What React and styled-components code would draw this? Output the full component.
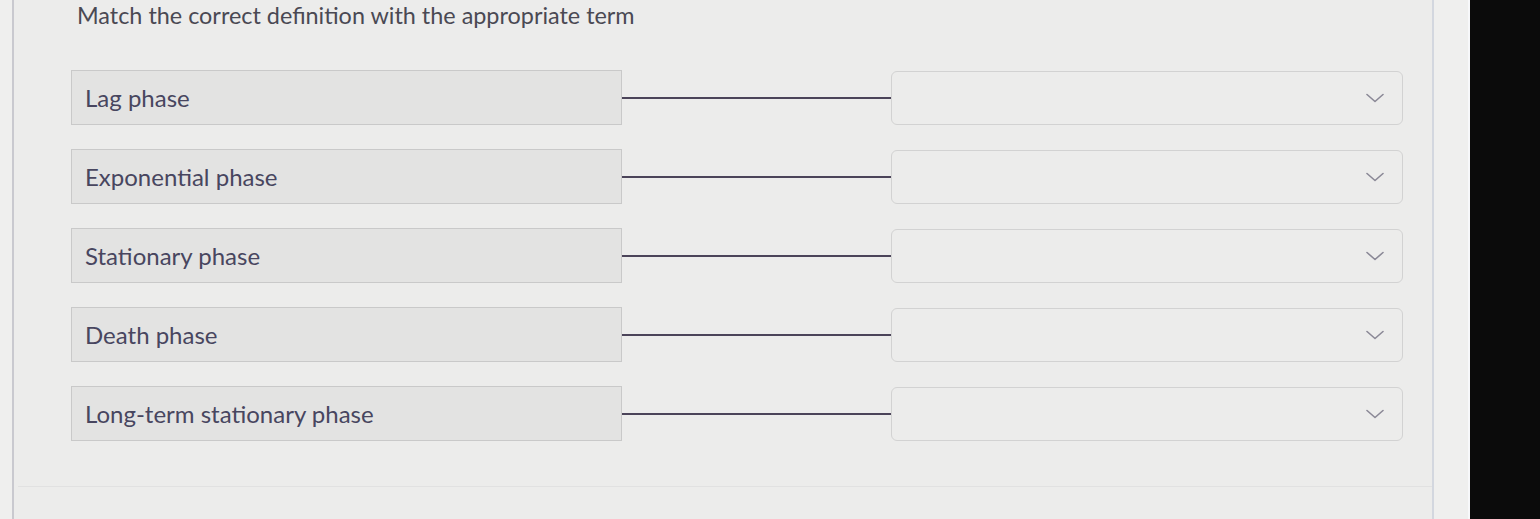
import React from "react";
import styled, { createGlobalStyle } from "styled-components";

const Global = createGlobalStyle`
  html, body {
    margin: 0;
    padding: 0;
    background: #0b0b0b;
  }
  * {
    box-sizing: border-box;
  }
`;

const Page = styled.div`
  display: flex;
  width: 1540px;
  height: 519px;
  overflow: hidden;
  background: #0b0b0b;
`;

const Screen = styled.div`
  width: 1470px;
  height: 519px;
  background: #efefee;
  padding-left: 12px;
  border-right: 2px solid #f7f8fa;
`;

const Card = styled.div`
  width: 1422px;
  height: 519px;
  border-left: 2px solid #c9c9cf;
  border-right: 2px solid #d3d7df;
  background: #ececeb;
  padding: 0 0 0 57px;
  position: relative;
`;

const Title = styled.h1`
  margin: 0;
  padding-top: 1px;
  padding-left: 6px;
  font-family: Lato, "Open Sans", sans-serif;
  font-weight: 400;
  font-size: 23.4px;
  line-height: 29px;
  color: #4a4953;
`;

const List = styled.div`
  display: flex;
  flex-direction: column;
  gap: 24px;
  margin-top: 40px;
`;

const Row = styled.div`
  display: flex;
  align-items: center;
  height: 55px;
`;

const Term = styled.div`
  width: 551px;
  height: 55px;
  display: flex;
  align-items: center;
  padding-left: 13px;
  background: #e3e3e2;
  border: 1px solid #c9c9c9;
  font-family: Lato, "Open Sans", sans-serif;
  font-size: 24px;
  color: #48465f;
`;

const Connector = styled.div`
  width: 269px;
  height: 2px;
  background: #4b4459;
`;

const Select = styled.div`
  width: 512px;
  height: 54px;
  display: flex;
  align-items: center;
  justify-content: flex-end;
  padding-right: 18px;
  background: #ececeb;
  border: 1.5px solid #d2d2d2;
  border-radius: 6px;
`;

const Footer = styled.div`
  position: absolute;
  left: 4px;
  right: 0;
  top: 486px;
  height: 1px;
  background: #e1e1e1;
`;

const Chevron = () => (
  <svg width="18" height="10" viewBox="0 0 18 10" fill="none">
    <path d="M1 1.5 L9 8.5 L17 1.5" stroke="#8a8896" strokeWidth="1.6" strokeLinecap="round" strokeLinejoin="round" />
  </svg>
);

const terms = [
  "Lag phase",
  "Exponential phase",
  "Stationary phase",
  "Death phase",
  "Long-term stationary phase",
];

export default function App() {
  return (
    <Page>
      <Global />
      <Screen>
        <Card>
          <Title>Match the correct definition with the appropriate term</Title>
          <List>
            {terms.map((t) => (
              <Row key={t}>
                <Term>{t}</Term>
                <Connector />
                <Select>
                  <Chevron />
                </Select>
              </Row>
            ))}
          </List>
          <Footer />
        </Card>
      </Screen>
    </Page>
  );
}
